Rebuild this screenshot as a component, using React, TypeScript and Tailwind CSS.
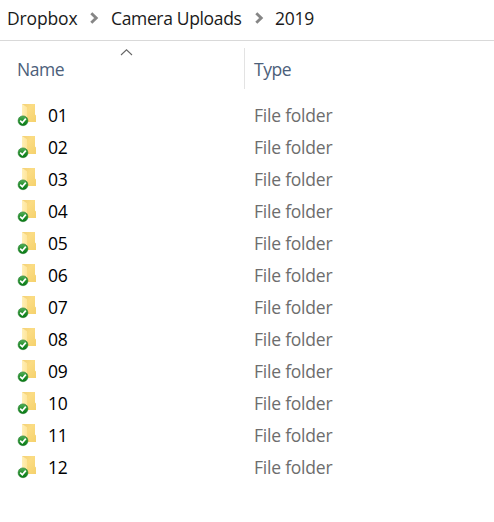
const folders = ["01", "02", "03", "04", "05", "06", "07", "08", "09", "10", "11", "12"];

function Chevron({ className }: { className: string }) {
  return (
    <svg className={className} width="9" height="12" viewBox="0 0 9 12" fill="none">
      <path d="M1.3 1.2 L6.2 6 L1.3 10.8" stroke="#868686" strokeWidth="2.9" />
    </svg>
  );
}

function FolderIcon() {
  return (
    <svg width="20" height="25" viewBox="0 0 20 25" className="shrink-0">
      <defs>
        <linearGradient id="front" x1="0" y1="0" x2="1" y2="1">
          <stop offset="0" stopColor="#f3d077" />
          <stop offset="0.4" stopColor="#fbdc83" />
          <stop offset="1" stopColor="#f5d16c" />
        </linearGradient>
        <linearGradient id="flap" x1="0" y1="0" x2="1" y2="0">
          <stop offset="0" stopColor="#ffefb8" />
          <stop offset="1" stopColor="#fee59b" />
        </linearGradient>
        <linearGradient id="badge" x1="0" y1="0" x2="0" y2="1">
          <stop offset="0" stopColor="#58b25c" />
          <stop offset="0.5" stopColor="#218f2b" />
          <stop offset="1" stopColor="#087a15" />
        </linearGradient>
      </defs>
      <path d="M5 1H18V11.5L19 12.5V19H5Z" fill="url(#front)" />
      <path d="M5 1L10 4.2V19H5Z" fill="url(#flap)" />
      <circle cx="6" cy="17.8" r="4.9" fill="url(#badge)" stroke="#237b2b" strokeWidth=".6" />
      <path d="M3.2 17.7L5.3 19.8L8.8 15.6" fill="none" stroke="#fff" strokeWidth="1.7" />
    </svg>
  );
}

export default function App() {
  return (
    <main className="h-[522px] w-[494px] overflow-hidden bg-white font-['Open_Sans',sans-serif] text-[17.5px] leading-6 text-black">
      <nav className="flex h-[41px] items-start border-b border-[#d9d9d9] pt-[6px] pl-[7px] whitespace-nowrap text-[#1a1a1a]">
        <span className="w-[83px] tracking-[-0.15px]">Dropbox</span>
        <Chevron className="mt-[6px] mr-[12px] shrink-0" />
        <span className="w-[144px] tracking-[-0.35px]">Camera Uploads</span>
        <Chevron className="mt-[6px] mr-[11px] shrink-0" />
        <span className="tracking-[-0.25px]">2019</span>
      </nav>
      <header className="flex h-[59px] pt-[7px] text-[#4c607a]">
        <div className="relative h-[41px] w-[245px] border-r border-[#e3e3e3] pt-[9px] pl-[17px] tracking-[-0.45px]">
          Name
          <svg className="absolute top-[1px] left-[120px]" width="13" height="7" viewBox="0 0 13 7" fill="none">
            <path d="M1 6L6.5 .8L12 6" stroke="#666" strokeWidth="1.1" />
          </svg>
        </div>
        <div className="pt-[9px] pl-[9px] tracking-[-0.45px]">Type</div>
      </header>
      <section>
        {folders.map((name) => (
          <div key={name} className="flex h-8 pl-[17px]">
            <div className="flex w-[237px] pt-[3px]">
              <FolderIcon />
              <span className="pl-[11px] tracking-[-0.3px]">{name}</span>
            </div>
            <span className="pt-[3px] tracking-[-0.22px] text-[#6d6d6d]">File folder</span>
          </div>
        ))}
      </section>
    </main>
  );
}
